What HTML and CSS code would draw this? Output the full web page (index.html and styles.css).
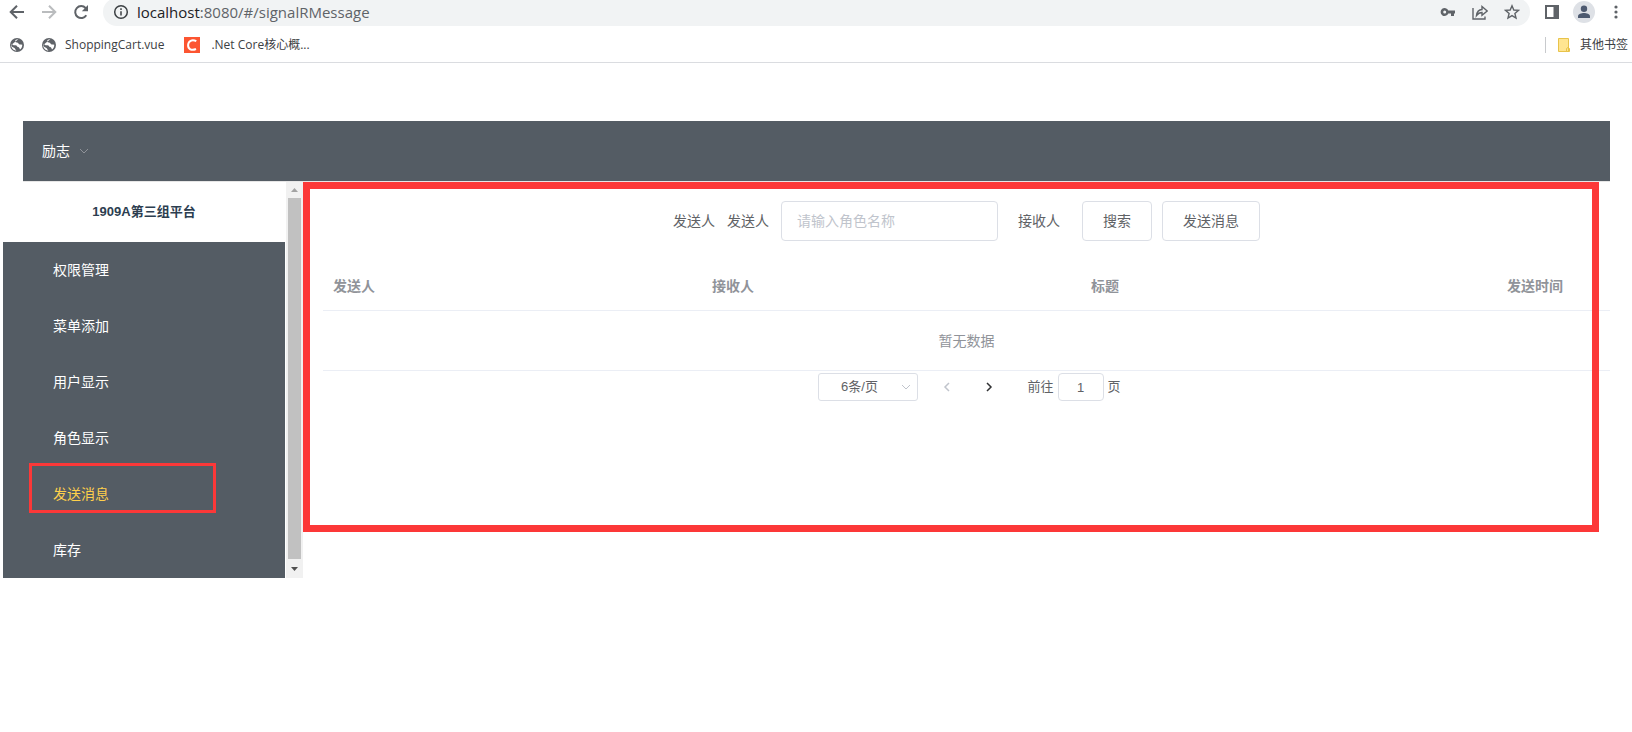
FILE: index.html
```html
<!DOCTYPE html>
<html lang="zh-CN">
<head>
<meta charset="utf-8">
<title>发送消息</title>
<link rel="stylesheet" href="styles.css">
</head>
<body>
<header class="browser">
  <div class="toolbar">
    <button class="icon-btn" type="button" aria-label="后退"><svg viewBox="0 0 16 16" class="line"><path d="M15 8H2M8 1.700L1.700 8L8 14.300"/></svg></button>
    <button class="icon-btn faded" type="button" aria-label="前进"><svg viewBox="0 0 16 16" class="line"><path d="M1 8H14M8 1.700L14.300 8L8 14.300"/></svg></button>
    <button class="icon-btn" type="button" aria-label="重新加载"><svg viewBox="0 0 16 16" class="line"><path d="M13.300 11.300A6 6 0 1 1 12.600 4L14 5.500"/><path class="solid" d="M15 1V7.200H8.800Z"/></svg></button>
    <div class="address">
      <svg class="info line" viewBox="0 0 16 16"><circle cx="8" cy="8" r="6.300"/><path d="M8 7.200V11.500M8 4.300V6"/></svg>
      <span class="url"><b>localhost</b>:8080/#/signalRMessage</span>
      <div class="address-actions">
        <button class="icon-btn" type="button" aria-label="密码"><svg viewBox="0 0 16 16"><path class="solid" fill-rule="evenodd" d="M8.300 6.500A4 4 0 1 0 8.300 9.500H11V12H14V9.500H15V6.500ZM4.700 6.500A1.500 1.500 0 1 1 4.700 9.500A1.500 1.500 0 1 1 4.700 6.500Z"/></svg></button>
        <button class="icon-btn" type="button" aria-label="分享"><svg viewBox="0 0 16 16" class="thin"><path d="M1 4V15H13V12.500M4.500 11.500C5 7.500 7 5.700 10 5.500V2.500L15.200 7L10 11.200V8.500C7.500 8.500 6 9.500 4.500 11.500Z"/></svg></button>
        <button class="icon-btn" type="button" aria-label="收藏"><svg viewBox="0 0 16 16" class="thin"><path d="M8 1.800L9.800 6L14.500 6.400L10.900 9.500L12 14L8 11.600L4 14L5.100 9.500L1.500 6.400L6.200 6Z"/></svg></button>
      </div>
    </div>
    <button class="icon-btn" type="button" aria-label="侧边栏"><svg viewBox="0 0 16 16"><path class="solid" fill-rule="evenodd" d="M1 1H15V15H1ZM3 3V13H9.500V3Z"/></svg></button>
    <button class="avatar" type="button" aria-label="用户"><svg viewBox="0 0 22 22"><circle cx="11" cy="7.800" r="3.200"/><path d="M5 17V15.500C5 12.800 8.500 12 11 12S17 12.800 17 15.500V17Z"/></svg></button>
    <button class="icon-btn" type="button" aria-label="菜单"><svg viewBox="0 0 16 16" class="dots"><circle cx="8" cy="3" r="1.600"/><circle cx="8" cy="8" r="1.600"/><circle cx="8" cy="13" r="1.600"/></svg></button>
  </div>
  <nav class="bookmarks" aria-label="书签">
    <a class="bookmark" href="#" aria-label="网站"><svg viewBox="0 0 16 16"><circle class="solid" cx="8" cy="8" r="7"/><path class="land" d="M9.300 2.300C7 2.200 5.800 3.500 6.200 4.700C6.700 6 9 5 9.500 6.500C10 8 11.500 7 13.300 7.700C13.300 10 12.300 11.500 11 12.500C10.600 11 9.700 10 8.300 9.800C8 8.300 6.300 8 4.500 8.300L2.500 6.800C2.200 9.500 3.500 10.500 5 10.700C6.300 11 6 12.500 7.500 13.500C5 13.700 2.200 11.500 2.200 8"/></svg></a>
    <a class="bookmark" href="#"><svg viewBox="0 0 16 16"><circle class="solid" cx="8" cy="8" r="7"/><path class="land" d="M9.300 2.300C7 2.200 5.800 3.500 6.200 4.700C6.700 6 9 5 9.500 6.500C10 8 11.500 7 13.300 7.700C13.300 10 12.300 11.500 11 12.500C10.600 11 9.700 10 8.300 9.800C8 8.300 6.300 8 4.500 8.300L2.500 6.800C2.200 9.500 3.500 10.500 5 10.700C6.300 11 6 12.500 7.500 13.500C5 13.700 2.200 11.500 2.200 8"/></svg>ShoppingCart.vue</a>
    <a class="bookmark spaced" href="#"><svg viewBox="0 0 16 16"><path fill="#fc5531" d="M0 0H16V16H0Z"/><path fill="none" stroke="#fff" stroke-width="2" d="M12.300 4.200C8 2 4.300 4 4.100 8C4 12.200 7.500 14 12 12"/></svg>.Net Core核心概...</a>
    <a class="bookmark others" href="#"><svg viewBox="0 0 16 16"><path fill="#ffe591" stroke="#e8c34a" d="M2.500 1.500H12.500V14.500H2.500ZM10.500 14.500V11.500Q12 9.500 13.500 11.500V14.500Z"/></svg>其他书签</a>
  </nav>
</header>

<div class="app">
  <div class="app-header">
    <button class="account" type="button">励志<svg class="chevron" viewBox="0 0 12 12"><path d="M2 4L6 8L10 4"/></svg></button>
  </div>
  <div class="app-body">
    <aside class="sidebar">
      <div class="side-content">
        <h1 class="brand">1909A第三组平台</h1>
        <nav class="menu">
          <a class="menu-item" href="#">权限管理</a>
          <a class="menu-item" href="#">菜单添加</a>
          <a class="menu-item" href="#">用户显示</a>
          <a class="menu-item" href="#">角色显示</a>
          <a class="menu-item active" href="#">发送消息<span class="mark mark-item"></span></a>
          <a class="menu-item" href="#">库存</a>
        </nav>
      </div>
      <div class="scrollbar" aria-hidden="true">
        <svg viewBox="0 0 17 16"><path fill="#a3a3a3" d="M5 10L8.500 6L12 10Z"/></svg>
        <div class="thumb"></div>
        <svg class="down" viewBox="0 0 17 19"><path fill="#505050" d="M5 8L8.500 12L12 8Z"/></svg>
      </div>
    </aside>
    <main class="content">
      <form class="search">
        <span class="caption">发送人</span>
        <label for="sender">发送人</label>
        <input class="sender" id="sender" type="text" placeholder="请输入角色名称">
        <span class="receiver">接收人</span>
        <div class="actions">
          <button class="btn" type="button">搜索</button>
          <button class="btn" type="button">发送消息</button>
        </div>
      </form>
      <table class="messages">
        <thead><tr><th>发送人</th><th>接收人</th><th>标题</th><th class="time">发送时间</th></tr></thead>
        <tbody><tr><td class="empty" colspan="4">暂无数据</td></tr></tbody>
      </table>
      <div class="pagination">
        <div class="size-wrap">
          <select class="size" aria-label="每页条数"><option>6条/页</option></select>
          <svg class="chevron size-arrow" viewBox="0 0 12 12"><path d="M2 4L6 8L10 4"/></svg>
        </div>
        <button class="page-btn" type="button" aria-label="上一页" disabled><svg viewBox="0 0 12 12"><path d="M8 2L4 6L8 10"/></svg></button>
        <button class="page-btn" type="button" aria-label="下一页"><svg viewBox="0 0 12 12"><path d="M4 2L8 6L4 10"/></svg></button>
        <label class="jump">前往<input type="text" value="1">页</label>
      </div>
      <div class="mark mark-main"></div>
    </main>
  </div>
</div>
</body>
</html>
```
FILE: styles.css
```css
* { box-sizing: border-box; }

body {
  margin: 0;
  background: #fff;
  color: #606266;
  font: 14px/20px "Liberation Sans", "Noto Sans CJK SC", sans-serif;
}

button, input, select { font: inherit; color: inherit; }
button { padding: 0; border: 0; background: none; }
a { color: inherit; text-decoration: none; }
svg { display: block; flex: none; }

/* Browser bar */
.browser {
  border-bottom: 1px solid #dadce0;
  color: #3c4043;
  font-family: "Open Sans", "Noto Sans CJK SC", sans-serif;
}
.toolbar {
  display: flex;
  align-items: center;
  gap: 16px;
  height: 28px;
  margin-top: -2px;
  padding: 0 8px 0 9px;
}
.icon-btn { color: #5f6368; }
.icon-btn svg, .info { width: 16px; height: 16px; }
.faded { color: #babcbe; }
.line, .thin { fill: none; stroke: currentColor; stroke-width: 2; }
.line.info { stroke-width: 1.5; }
.thin { stroke-width: 1.4; }
.solid, .dots { fill: #5f6368; stroke: none; }
.address {
  display: flex;
  flex: 1;
  align-items: center;
  gap: 8px;
  height: 28px;
  margin: 0 -2px;
  padding: 0 10px;
  border-radius: 14px;
  background: #f1f3f4;
}
.url { color: #5f6368; font-size: 15px; }
.url b { color: #202124; font-weight: 400; }
.address-actions { display: flex; gap: 16px; margin-left: auto; }
.avatar {
  width: 22px;
  height: 22px;
  margin: 0 -3px;
  border-radius: 50%;
  background: #dee1e6;
}
.avatar svg { fill: #4d5a70; }
.bookmarks {
  display: flex;
  align-items: center;
  gap: 16px;
  height: 36px;
  padding: 1px 4px 0 9px;
  font-size: 12px;
}
.bookmark { display: flex; align-items: center; gap: 8px; }
.bookmark svg { width: 16px; height: 16px; }
.spaced { gap: 11px; margin-left: 4px; }
.land { fill: #fff; }
.others {
  height: 16px;
  margin-left: auto;
  padding-left: 10px;
  border-left: 1px solid #c8cacd;
}

/* Application */
.app { padding-top: 58px; }
.app-header {
  display: flex;
  align-items: center;
  height: 61px;
  margin: 0 22px 0 23px;
  padding-left: 19px;
  border-bottom: 1px solid #e6e6e6;
  background: #545c64;
}
.account { display: flex; align-items: center; gap: 8px; color: #fff; }
.chevron {
  width: 12px;
  height: 12px;
  fill: none;
  stroke: #909399;
}
.app-body { display: flex; align-items: flex-start; }
.sidebar { display: flex; flex: none; width: 303px; padding-left: 3px; }
.side-content { flex: 1; margin-right: 1px; }
.brand {
  margin: 0;
  color: #2c3e50;
  font-size: 13px;
  line-height: 60px;
  text-align: center;
}
.menu { background: #545c64; }
.menu-item {
  display: block;
  position: relative;
  padding-left: 50px;
  color: #fff;
  line-height: 56px;
}
.menu-item.active { color: #ffd04b; }
.scrollbar {
  display: flex;
  flex-direction: column;
  width: 17px;
  background: #f1f1f1;
}
.thumb { flex: 1; margin: 0 2px; background: #c1c1c1; }

.content {
  position: relative;
  flex: 1;
  min-width: 0;
  padding: 19px 22px 0 20px;
}
.search {
  display: flex;
  align-items: center;
  justify-content: center;
  gap: 12px;
  margin-bottom: 21px;
}
.sender {
  width: 217px;
  height: 40px;
  padding: 0 15px;
  border: 1px solid #dcdfe6;
  border-radius: 4px;
  outline: 0;
}
.sender::placeholder { color: #c0c4cc; }
.receiver { margin: 0 10px 0 8px; }
.actions { display: flex; gap: 10px; }
.btn {
  height: 40px;
  padding: 0 20px;
  border: 1px solid #dcdfe6;
  border-radius: 4px;
  background: #fff;
}
.messages {
  width: 100%;
  border-collapse: separate;
  border-spacing: 0;
  table-layout: fixed;
  color: #909399;
}
.messages th, .messages td { border-bottom: 1px solid #ebeef5; }
.messages th { height: 49px; padding: 0 10px; text-align: left; }
.messages .time { width: 150px; text-align: center; }
.messages .empty { height: 60px; padding: 0; text-align: center; }

.pagination {
  display: flex;
  align-items: center;
  justify-content: center;
  padding: 2px 0 0 6px;
  font-size: 13px;
}
.size-wrap { display: grid; align-items: center; width: 100px; margin-right: 8px; }
.size-wrap > * { grid-area: 1 / 1; }
.size {
  appearance: none;
  height: 28px;
  padding: 0 25px 0 7px;
  border: 1px solid #dcdfe6;
  border-radius: 3px;
  background: #fff;
  text-align: center;
}
.size-arrow { justify-self: end; margin-right: 6px; stroke: #c0c4cc; pointer-events: none; }
.page-btn { display: grid; place-items: center; width: 42px; height: 28px; }
.page-btn svg { width: 12px; height: 12px; fill: none; stroke: #303133; stroke-width: 1.5; }
.page-btn:disabled svg { stroke: #c0c4cc; }
.jump { display: flex; align-items: center; gap: 4px; margin-left: 17px; }
.jump input {
  width: 46px;
  height: 28px;
  padding: 0;
  border: 1px solid #dcdfe6;
  border-radius: 4px;
  text-align: center;
}

/* Red outlines drawn over the page */
.mark { position: absolute; pointer-events: none; border: 3px solid #fc3838; }
.mark-item { top: -3px; left: 26px; width: 187px; height: 50px; }
.mark-main { top: 0; right: 33px; left: 0; height: 350px; border-width: 7px; }
```
